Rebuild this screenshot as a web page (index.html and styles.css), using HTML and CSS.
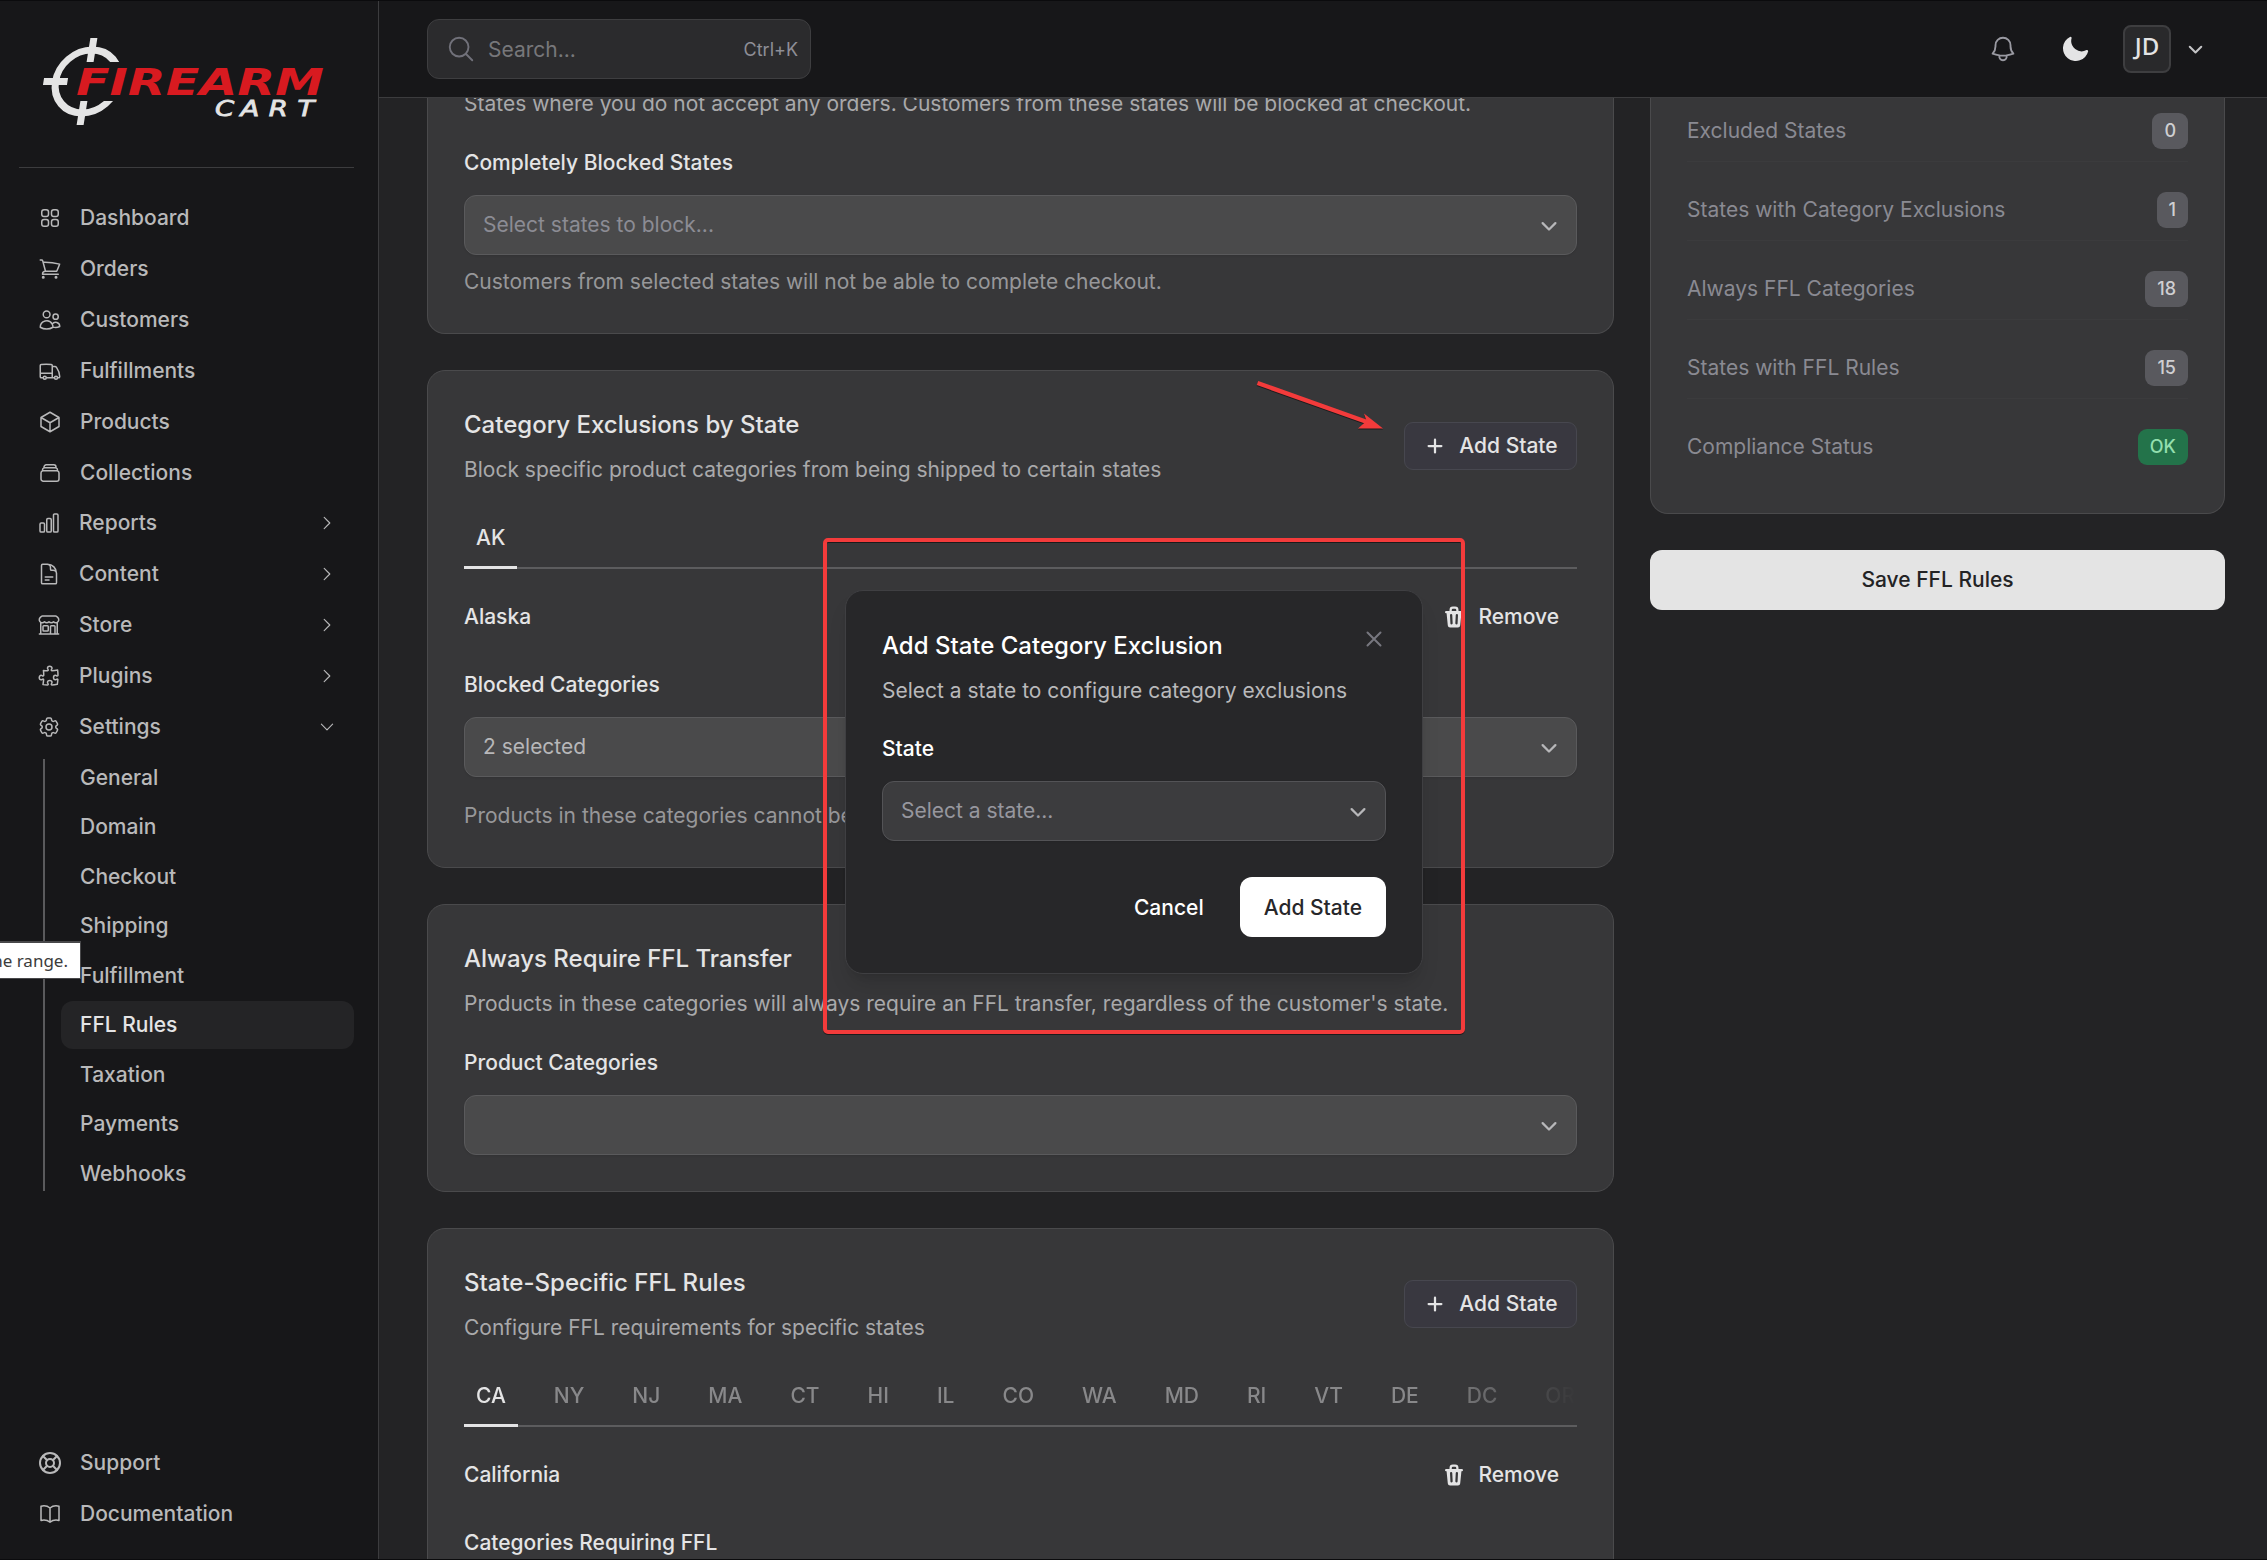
FILE: index.html
```html
<!DOCTYPE html>
<html lang="en">

	<head>
		<meta charset="UTF-8">
		<title>FFL Rules - Firearm Cart</title>
		<link rel="stylesheet" href="styles.css">
	</head>

	<body>
		<!-- shared icons -->
		<svg class="sprite">
			<symbol id="chev-down" viewBox="0 0 20 20"><path fill="currentColor" d="M5.22 8.22a.75.75 0 0 1 1.06 0L10 11.94l3.72-3.72a.75.75 0 1 1 1.06 1.06l-4.25 4.25a.75.75 0 0 1-1.06 0L5.22 9.28a.75.75 0 0 1 0-1.06Z"/></symbol>
			<symbol id="chev-right" viewBox="0 0 24 24"><path d="m8.25 4.5 7.5 7.5-7.5 7.5"/></symbol>
			<symbol id="plus" viewBox="0 0 16 16"><path fill="currentColor" d="M8.75 3.75a.75.75 0 0 0-1.5 0v3.5h-3.5a.75.75 0 0 0 0 1.5h3.5v3.5a.75.75 0 0 0 1.5 0v-3.5h3.5a.75.75 0 0 0 0-1.5h-3.5v-3.5Z"/></symbol>
			<symbol id="trash" viewBox="0 0 16 16"><path fill="currentColor" fill-rule="evenodd" d="M5 3.25V4H2.75a.75.75 0 0 0 0 1.5h.3l.815 8.15A1.5 1.5 0 0 0 5.357 15h5.285a1.5 1.5 0 0 0 1.493-1.35l.815-8.15h.3a.75.75 0 0 0 0-1.5H11v-.75A2.25 2.25 0 0 0 8.75 1h-1.5A2.25 2.25 0 0 0 5 3.25Zm2.25-.75a.75.75 0 0 0-.75.75V4h3v-.75a.75.75 0 0 0-.75-.75h-1.5ZM6.05 6a.75.75 0 0 1 .787.713l.275 5.5a.75.75 0 0 1-1.498.075l-.275-5.5A.75.75 0 0 1 6.05 6Zm3.9 0a.75.75 0 0 1 .712.787l-.275 5.5a.75.75 0 0 1-1.498-.075l.275-5.5a.75.75 0 0 1 .786-.711Z"/></symbol>
		</svg>

		<aside class="sidebar">
			<div class="brand">
				<svg class="logo" viewBox="0 0 290 92">
					<clipPath id="ring-gap"><path d="M-60-60H60v40.5H0v39h60V60H-60z"/></clipPath>
					<g transform="translate(47 45.5) skewX(-9)">
						<circle class="ring" r="31.5" clip-path="url(#ring-gap)"/>
						<path class="tick" d="M-3.5-43.5h7v24h-7zM-3.5 19.5h7v24h-7zM-43.5-3.5h24v7h-24z"/>
					</g>
					<text class="logo-main" x="36" y="58.5" textLength="248" lengthAdjust="spacingAndGlyphs">FIREARM</text>
					<text class="logo-sub" transform="scale(1.25 1)" x="140 160.5 183 206" y="80">CART</text>
				</svg>
			</div>

			<nav class="nav">
				<a class="nav-item"><svg class="icon" viewBox="0 0 24 24"><path d="M3.75 6A2.25 2.25 0 0 1 6 3.75h2.25A2.25 2.25 0 0 1 10.5 6v2.25a2.25 2.25 0 0 1-2.25 2.25H6a2.25 2.25 0 0 1-2.25-2.25V6ZM3.75 15.75A2.25 2.25 0 0 1 6 13.5h2.25a2.25 2.25 0 0 1 2.25 2.25V18a2.25 2.25 0 0 1-2.25 2.25H6A2.25 2.25 0 0 1 3.75 18v-2.25ZM13.5 6a2.25 2.25 0 0 1 2.25-2.25H18A2.25 2.25 0 0 1 20.25 6v2.25A2.25 2.25 0 0 1 18 10.5h-2.25a2.25 2.25 0 0 1-2.25-2.25V6ZM13.5 15.75a2.25 2.25 0 0 1 2.25-2.25H18a2.25 2.25 0 0 1 2.25 2.25V18A2.25 2.25 0 0 1 18 20.25h-2.25A2.25 2.25 0 0 1 13.5 18v-2.25Z"/></svg>Dashboard</a>
				<a class="nav-item"><svg class="icon" viewBox="0 0 24 24"><path d="M2.25 3h1.386c.51 0 .955.343 1.087.835l.383 1.437M7.5 14.25a3 3 0 0 0-3 3h15.75m-12.75-3h11.218c1.121-2.3 2.1-4.684 2.924-7.138a60.114 60.114 0 0 0-16.536-1.84M7.5 14.25 5.106 5.272M6 20.25a.75.75 0 1 1-1.5 0 .75.75 0 0 1 1.5 0Zm12.75 0a.75.75 0 1 1-1.5 0 .75.75 0 0 1 1.5 0Z"/></svg>Orders</a>
				<a class="nav-item"><svg class="icon" viewBox="0 0 24 24"><path d="M15 19.128a9.38 9.38 0 0 0 2.625.372 9.337 9.337 0 0 0 4.121-.952 4.125 4.125 0 0 0-7.533-2.493M15 19.128v-.003c0-1.113-.285-2.16-.786-3.07M15 19.128v.106A12.318 12.318 0 0 1 8.624 21c-2.331 0-4.512-.645-6.374-1.766l-.001-.109a6.375 6.375 0 0 1 11.964-3.07M12 6.375a3.375 3.375 0 1 1-6.75 0 3.375 3.375 0 0 1 6.75 0Zm8.25 2.25a2.625 2.625 0 1 1-5.25 0 2.625 2.625 0 0 1 5.25 0Z"/></svg>Customers</a>
				<a class="nav-item"><svg class="icon" viewBox="0 0 24 24"><path d="M8.25 18.75a1.5 1.5 0 0 1-3 0m3 0a1.5 1.5 0 0 0-3 0m3 0h6m-9 0H3.375a1.125 1.125 0 0 1-1.125-1.125V14.25m17.25 4.5a1.5 1.5 0 0 1-3 0m3 0a1.5 1.5 0 0 0-3 0m3 0h1.125c.621 0 1.129-.504 1.09-1.124a17.902 17.902 0 0 0-3.213-9.193 2.056 2.056 0 0 0-1.58-.86H14.25M16.5 18.75h-2.25m0-11.177v-.958c0-.568-.422-1.048-.987-1.106a48.554 48.554 0 0 0-10.026 0 1.106 1.106 0 0 0-.987 1.106v7.635m12-6.677v6.677m0 4.5v-4.5m0 0h-12"/></svg>Fulfillments</a>
				<a class="nav-item"><svg class="icon" viewBox="0 0 24 24"><path d="m21 7.5-9-5.25L3 7.5m18 0-9 5.25m9-5.25v9l-9 5.25M3 7.5l9 5.25M3 7.5v9l9 5.25m0-9v9"/></svg>Products</a>
				<a class="nav-item"><svg class="icon" viewBox="0 0 24 24"><path d="M6 6.878V6a2.25 2.25 0 0 1 2.25-2.25h7.5A2.25 2.25 0 0 1 18 6v.878m-12 0c.235-.083.487-.128.75-.128h10.5c.263 0 .515.045.75.128m-12 0A2.25 2.25 0 0 0 4.5 9v.878m13.5-3A2.25 2.25 0 0 1 19.5 9v.878m0 0a2.246 2.246 0 0 0-.75-.128H5.25c-.263 0-.515.045-.75.128m15 0A2.25 2.25 0 0 1 21 12v6a2.25 2.25 0 0 1-2.25 2.25H5.25A2.25 2.25 0 0 1 3 18v-6c0-.98.626-1.813 1.5-2.122"/></svg>Collections</a>

				<div class="nav-groups">
					<a class="nav-item"><svg class="icon" viewBox="0 0 24 24"><path d="M3 13.125C3 12.504 3.504 12 4.125 12h2.25c.621 0 1.125.504 1.125 1.125v6.75C7.5 20.496 6.996 21 6.375 21h-2.25A1.125 1.125 0 0 1 3 19.875v-6.75ZM9.75 8.625c0-.621.504-1.125 1.125-1.125h2.25c.621 0 1.125.504 1.125 1.125v11.25c0 .621-.504 1.125-1.125 1.125h-2.25a1.125 1.125 0 0 1-1.125-1.125V8.625ZM16.5 4.125c0-.621.504-1.125 1.125-1.125h2.25C20.496 3 21 3.504 21 4.125v15.75c0 .621-.504 1.125-1.125 1.125h-2.25a1.125 1.125 0 0 1-1.125-1.125V4.125Z"/></svg>Reports<svg class="icon caret"><use href="#chev-right"/></svg></a>
					<a class="nav-item"><svg class="icon" viewBox="0 0 24 24"><path d="M19.5 14.25v-2.625a3.375 3.375 0 0 0-3.375-3.375h-1.5A1.125 1.125 0 0 1 13.5 7.125v-1.5a3.375 3.375 0 0 0-3.375-3.375H8.25m0 12.75h7.5m-7.5 3H12M10.5 2.25H5.625c-.621 0-1.125.504-1.125 1.125v17.25c0 .621.504 1.125 1.125 1.125h12.75c.621 0 1.125-.504 1.125-1.125V11.25a9 9 0 0 0-9-9Z"/></svg>Content<svg class="icon caret"><use href="#chev-right"/></svg></a>
					<a class="nav-item"><svg class="icon" viewBox="0 0 24 24"><path d="M13.5 21v-7.5a.75.75 0 0 1 .75-.75h3a.75.75 0 0 1 .75.75V21m-4.5 0H2.36m11.14 0H18m0 0h3.64m-1.39 0V9.349M3.75 21V9.349m0 0a3.001 3.001 0 0 0 3.75-.615A2.993 2.993 0 0 0 9.75 9.75c.896 0 1.7-.393 2.25-1.016a2.993 2.993 0 0 0 2.25 1.016c.896 0 1.7-.393 2.25-1.015a3.001 3.001 0 0 0 3.75.614m-16.5 0a3.004 3.004 0 0 1-.621-4.72l1.189-1.19A1.5 1.5 0 0 1 5.378 3h13.243a1.5 1.5 0 0 1 1.06.44l1.19 1.189a3 3 0 0 1-.621 4.72M6.75 18h3.75a.75.75 0 0 0 .75-.75V13.5a.75.75 0 0 0-.75-.75H6.75a.75.75 0 0 0-.75.75v3.75c0 .414.336.75.75.75Z"/></svg>Store<svg class="icon caret"><use href="#chev-right"/></svg></a>
					<a class="nav-item"><svg class="icon" viewBox="0 0 24 24"><path d="M14.25 6.087c0-.355.186-.676.401-.959.221-.29.349-.634.349-1.003 0-1.036-1.007-1.875-2.25-1.875s-2.25.84-2.25 1.875c0 .369.128.713.349 1.003.215.283.401.604.401.959v0a.64.64 0 0 1-.657.643 48.39 48.39 0 0 1-4.163-.3c.186 1.613.293 3.25.315 4.907a.656.656 0 0 1-.658.663v0c-.355 0-.676-.186-.959-.401a1.647 1.647 0 0 0-1.003-.349c-1.036 0-1.875 1.007-1.875 2.25s.84 2.25 1.875 2.25c.369 0 .713-.128 1.003-.349.283-.215.604-.401.959-.401v0c.31 0 .555.26.532.57a48.039 48.039 0 0 1-.642 5.056c1.518.19 3.058.309 4.616.354a.64.64 0 0 0 .657-.643v0c0-.355-.186-.676-.401-.959a1.647 1.647 0 0 1-.349-1.003c0-1.035 1.008-1.875 2.25-1.875 1.243 0 2.25.84 2.25 1.875 0 .369-.128.713-.349 1.003-.215.283-.4.604-.4.959v0c0 .333.277.599.61.58a48.1 48.1 0 0 0 5.427-.63 48.05 48.05 0 0 0 .582-4.717.532.532 0 0 0-.533-.57v0c-.355 0-.676.186-.959.401-.29.221-.634.349-1.003.349-1.035 0-1.875-1.007-1.875-2.25s.84-2.25 1.875-2.25c.37 0 .713.128 1.003.349.283.215.604.401.96.401v0a.656.656 0 0 0 .658-.663 48.422 48.422 0 0 0-.37-5.36c-1.886.342-3.81.574-5.766.689a.578.578 0 0 1-.61-.58v0Z"/></svg>Plugins<svg class="icon caret"><use href="#chev-right"/></svg></a>
					<a class="nav-item"><svg class="icon" viewBox="0 0 24 24"><path d="M9.594 3.94c.09-.542.56-.94 1.11-.94h2.593c.55 0 1.02.398 1.11.94l.213 1.281c.063.374.313.686.645.87.074.04.147.083.22.127.325.196.72.257 1.075.124l1.217-.456a1.125 1.125 0 0 1 1.37.49l1.296 2.247a1.125 1.125 0 0 1-.26 1.431l-1.003.827c-.293.241-.438.613-.43.992a7.723 7.723 0 0 1 0 .255c-.008.378.137.75.43.991l1.004.827c.424.35.534.955.26 1.43l-1.298 2.247a1.125 1.125 0 0 1-1.369.491l-1.217-.456c-.355-.133-.75-.072-1.076.124a6.47 6.47 0 0 1-.22.128c-.331.183-.581.495-.644.869l-.213 1.281c-.09.543-.56.94-1.11.94h-2.594c-.55 0-1.019-.398-1.11-.94l-.213-1.281c-.062-.374-.312-.686-.644-.87a6.52 6.52 0 0 1-.22-.127c-.325-.196-.72-.257-1.076-.124l-1.217.456a1.125 1.125 0 0 1-1.369-.49l-1.297-2.247a1.125 1.125 0 0 1 .26-1.431l1.004-.827c.292-.24.437-.613.43-.991a6.932 6.932 0 0 1 0-.255c.007-.38-.138-.751-.43-.992l-1.004-.827a1.125 1.125 0 0 1-.26-1.43l1.297-2.247a1.125 1.125 0 0 1 1.37-.491l1.216.456c.356.133.751.072 1.076-.124.072-.044.146-.086.22-.128.332-.183.582-.495.644-.869l.214-1.28Z"/><path d="M15 12a3 3 0 1 1-6 0 3 3 0 0 1 6 0Z"/></svg>Settings<svg class="icon caret open"><use href="#chev-right"/></svg></a>
				</div>

				<div class="subnav">
					<a class="sub-item">General</a>
					<a class="sub-item">Domain</a>
					<a class="sub-item">Checkout</a>
					<a class="sub-item">Shipping</a>
					<a class="sub-item">Fulfillment</a>
					<a class="sub-item current">FFL Rules</a>
					<a class="sub-item">Taxation</a>
					<a class="sub-item">Payments</a>
					<a class="sub-item">Webhooks</a>
				</div>
			</nav>

			<nav class="nav nav-bottom">
				<a class="nav-item"><svg class="icon bold" viewBox="0 0 24 24"><circle cx="12" cy="12" r="10"/><circle cx="12" cy="12" r="4"/><path d="m4.93 4.93 4.24 4.24M14.83 9.17l4.24-4.24M14.83 14.83l4.24 4.24M9.17 14.83l-4.24 4.24"/></svg>Support</a>
				<a class="nav-item"><svg class="icon" viewBox="0 0 24 24"><path d="M12 6.042A8.967 8.967 0 0 0 6 3.75c-1.052 0-2.062.18-3 .512v14.25A8.987 8.987 0 0 1 6 18c2.305 0 4.408.867 6 2.292m0-14.25a8.966 8.966 0 0 1 6-2.292c1.052 0 2.062.18 3 .512v14.25A8.987 8.987 0 0 0 18 18a8.967 8.967 0 0 0-6 2.292m0-14.25v14.25"/></svg>Documentation</a>
			</nav>
		</aside>

		<div class="page">
			<header class="topbar">
				<div class="search">
					<svg class="icon large" viewBox="0 0 24 24"><path d="m21 21-5.197-5.197m0 0A7.5 7.5 0 1 0 5.196 5.196a7.5 7.5 0 0 0 10.607 10.607Z"/></svg>
					<span>Search...</span>
					<kbd>Ctrl+K</kbd>
				</div>
				<div class="tools">
					<svg class="icon large bell" viewBox="0 0 24 24"><path d="M14.857 17.082a23.848 23.848 0 0 0 5.454-1.31A8.967 8.967 0 0 1 18 9.75V9A6 6 0 0 0 6 9v.75a8.967 8.967 0 0 1-2.312 6.022c1.733.64 3.56 1.085 5.455 1.31m5.714 0a24.255 24.255 0 0 1-5.714 0m5.714 0a3 3 0 1 1-5.714 0"/></svg>
					<svg class="moon" viewBox="0 0 20 20"><path d="M7.455 2.004a.75.75 0 0 1 .26.77 7 7 0 0 0 9.958 7.967.75.75 0 0 1 1.067.853A8.5 8.5 0 1 1 6.647 1.921a.75.75 0 0 1 .808.083Z"/></svg>
					<div class="profile">
						<div class="avatar">JD</div>
						<svg class="profile-caret"><use href="#chev-down"/></svg>
					</div>
				</div>
			</header>

			<main class="content">
				<div class="column">
					<section class="card card-cut">
						<p class="desc">States where you do not accept any orders. Customers from these states will be blocked at checkout.</p>
						<div class="label">Completely Blocked States</div>
						<div class="select placeholder">Select states to block...<svg><use href="#chev-down"/></svg></div>
						<p class="help">Customers from selected states will not be able to complete checkout.</p>
					</section>

					<section class="card">
						<div class="card-head">
							<div>
								<h2>Category Exclusions by State</h2>
								<p class="desc">Block specific product categories from being shipped to certain states</p>
							</div>
							<button class="btn btn-add"><svg><use href="#plus"/></svg>Add State</button>
						</div>
						<div class="tabs-wrap">
							<div class="tabs"><span class="tab active">AK</span></div>
						</div>
						<div class="state-row">
							<span>Alaska</span>
							<button class="btn btn-remove"><svg><use href="#trash"/></svg>Remove</button>
						</div>
						<div class="label">Blocked Categories</div>
						<div class="select">2 selected<svg><use href="#chev-down"/></svg></div>
						<p class="help spaced">Products in these categories cannot be shipped to this state.</p>
					</section>

					<section class="card">
						<h2>Always Require FFL Transfer</h2>
						<p class="desc">Products in these categories will always require an FFL transfer, regardless of the customer's state.</p>
						<div class="label">Product Categories</div>
						<div class="select"><svg><use href="#chev-down"/></svg></div>
					</section>

					<section class="card">
						<div class="card-head">
							<div>
								<h2>State-Specific FFL Rules</h2>
								<p class="desc">Configure FFL requirements for specific states</p>
							</div>
							<button class="btn btn-add"><svg><use href="#plus"/></svg>Add State</button>
						</div>
						<div class="tabs-wrap">
							<div class="tabs fade">
								<span class="tab active">CA</span>
								<span class="tab">NY</span>
								<span class="tab">NJ</span>
								<span class="tab">MA</span>
								<span class="tab">CT</span>
								<span class="tab">HI</span>
								<span class="tab">IL</span>
								<span class="tab">CO</span>
								<span class="tab">WA</span>
								<span class="tab">MD</span>
								<span class="tab">RI</span>
								<span class="tab">VT</span>
								<span class="tab">DE</span>
								<span class="tab">DC</span>
								<span class="tab">OR</span>
							</div>
						</div>
						<div class="state-row">
							<span>California</span>
							<button class="btn btn-remove"><svg><use href="#trash"/></svg>Remove</button>
						</div>
						<div class="label">Categories Requiring FFL</div>
						<div class="select"><svg><use href="#chev-down"/></svg></div>
					</section>
				</div>

				<div class="column side">
					<section class="card card-cut summary">
						<div class="stat"><span>Excluded States</span><b class="badge">0</b></div>
						<div class="stat"><span>States with Category Exclusions</span><b class="badge">1</b></div>
						<div class="stat"><span>Always FFL Categories</span><b class="badge">18</b></div>
						<div class="stat"><span>States with FFL Rules</span><b class="badge">15</b></div>
						<div class="stat"><span>Compliance Status</span><b class="badge ok">OK</b></div>
					</section>
					<button class="btn btn-save">Save FFL Rules</button>
				</div>
			</main>
		</div>

		<div class="modal">
			<svg class="modal-close" viewBox="0 0 24 24"><path d="M5.5 5.5l13 13M18.5 5.5l-13 13"/></svg>
			<h2>Add State Category Exclusion</h2>
			<p class="desc">Select a state to configure category exclusions</p>
			<div class="label">State</div>
			<div class="select placeholder">Select a state...<svg><use href="#chev-down"/></svg></div>
			<div class="modal-actions">
				<button class="btn btn-cancel">Cancel</button>
				<button class="btn btn-primary">Add State</button>
			</div>
		</div>

		<!-- annotations -->
		<div class="mark-box"></div>
		<svg class="mark-arrow" viewBox="0 0 140 60">
			<path d="M7.5 8 117 47" stroke="#f33b3b" stroke-width="4.4"/>
			<path d="M133 53.5 114 38.5l2.5 7.5-8.5 7.5z" fill="#f33b3b"/>
		</svg>
		<div class="tip">the range.</div>
	</body>

</html>
```
FILE: styles.css
```css
* {
	box-sizing: border-box;
	margin: 0;
}

body {
	display: flex;
	height: 1560px;
	overflow: hidden;
	position: relative;
	border-top: 1px solid #0b0b0d;
	border-bottom: 1px solid #0b0b0d;
	background: #232325;
	color: #e4e4e5;
	font: 400 21px/30px Inter, sans-serif;
}

h2 {
	font-size: 24px;
	line-height: 36px;
	font-weight: 500;
}

.sprite {
	position: absolute;
	width: 0;
	height: 0;
}

.icon {
	width: 24px;
	height: 24px;
	flex: none;
	fill: none;
	stroke: currentColor;
	stroke-width: 1.5;
	stroke-linecap: round;
	stroke-linejoin: round;
}

.icon.bold {
	stroke-width: 2;
}

.icon.large {
	width: 30px;
	height: 30px;
}

/* sidebar */
.sidebar {
	display: flex;
	flex-direction: column;
	width: 379px;
	flex: none;
	padding: 35px 24px 21px 19px;
	border-right: 1px solid #3c3c3e;
	background: #171719;
}

.brand {
	height: 132px;
	padding-left: 21px;
	border-bottom: 1px solid #3c3c3e;
}

.logo {
	display: block;
	width: 290px;
	height: 92px;
}

.ring {
	fill: none;
	stroke: #e4e4e4;
	stroke-width: 7;
}

.tick {
	fill: #e4e4e4;
}

.logo-main {
	font: italic bold 38px "DejaVu Sans", sans-serif;
	fill: #d81a20;
}

.logo-sub {
	font: italic 22px "DejaVu Sans", sans-serif;
	fill: #e4e4e4;
	stroke: #e4e4e4;
	stroke-width: .8;
}

.nav {
	display: flex;
	flex-direction: column;
	gap: 3px;
	padding-top: 26px;
	color: #b9b9ba;
	font-weight: 500;
}

.nav-item {
	display: flex;
	align-items: center;
	gap: 18px;
	height: 48px;
	padding: 0 18px 0 19px;
}

.nav-groups {
	display: flex;
	flex-direction: column;
	gap: 3px;
	margin: -1.5px 0 0 -1px;
}

.caret {
	width: 18px;
	height: 18px;
	margin-left: auto;
}

.caret.open {
	transform: rotate(90deg);
}

.subnav {
	display: flex;
	flex-direction: column;
	gap: 1.5px;
	margin-left: 24px;
	padding-left: 18px;
	background: linear-gradient(#5a5a5c, #5a5a5c) 0 5px / 2px 432px no-repeat;
}

.sub-item {
	height: 48px;
	padding: 9px 19px;
	border-radius: 12px;
}

.sub-item.current {
	background: #242426;
	color: #e4e4e5;
}

.nav-bottom {
	margin-top: auto;
}

/* header */
.page {
	display: flex;
	flex: 1;
	flex-direction: column;
	min-width: 0;
}

.topbar {
	display: flex;
	flex: none;
	align-items: center;
	justify-content: space-between;
	height: 97px;
	padding: 0 58px 0 48px;
	border-bottom: 1px solid #3c3c3e;
	background: #171719;
}

.search {
	display: flex;
	align-items: center;
	gap: 12px;
	width: 384px;
	height: 60px;
	padding: 0 12px 0 18px;
	border: 1px solid #3e3e40;
	border-radius: 12px;
	background: #2b2b2d;
	color: #77777a;
}

.search span {
	padding-top: 2px;
}

.search kbd {
	margin-left: auto;
	color: #8e8e96;
	font: 400 18px Inter, sans-serif;
}

.search .icon {
	color: #71717a;
}

.tools {
	display: flex;
	align-items: center;
}

.bell {
	margin-right: 42px;
	color: #9a9aa2;
}

.moon {
	width: 30px;
	height: 30px;
	margin-right: 33px;
	fill: #e4e4e5;
}

.profile {
	display: flex;
	align-items: center;
	gap: 11px;
}

.avatar {
	width: 48px;
	height: 48px;
	border: 2px solid #3e3e40;
	border-radius: 8px;
	background: #29292b;
	font: 500 24px/38px "Noto Sans", sans-serif;
	text-align: center;
}

.profile-caret {
	width: 27px;
	height: 27px;
	margin-bottom: 2px;
	color: #c4c4c6;
}

/* cards */
.content {
	display: flex;
	flex: 1;
	gap: 36px;
	min-height: 0;
	padding: 0 42px 0 48px;
	overflow: hidden;
}

.column {
	display: flex;
	flex: none;
	flex-direction: column;
	gap: 36px;
	width: 1187px;
}

.column.side {
	width: 575px;
}

.card {
	flex: none;
	padding: 36px;
	border: 1px solid #4a4a4c;
	border-radius: 18px;
	background: #373739;
}

/* scrolled under the header */
.card-cut {
	padding-top: 0;
	border-top: 0;
	border-radius: 0 0 18px 18px;
}

.card-cut > .desc {
	margin-top: -9px;
}

.card-head {
	display: flex;
	align-items: center;
	justify-content: space-between;
}

.desc {
	color: #a9a9ab;
}

h2 + .desc {
	margin-top: 12px;
}

.label {
	margin: 29px 0 17px;
	font-weight: 500;
}

.select {
	display: flex;
	align-items: center;
	justify-content: space-between;
	height: 60px;
	padding: 0 12px 0 18px;
	border: 1px solid #5a5a5c;
	border-radius: 12px;
	background: #4a4a4b;
	color: #b7b7b9;
	box-shadow: 0 1px 2px rgba(0, 0, 0, .08);
}

.select.placeholder {
	color: #8c8c94;
}

.select svg {
	width: 30px;
	height: 30px;
	margin-left: auto;
	color: #b7b7b9;
}

.help {
	margin-top: 12px;
	color: #97979a;
}

.help.spaced {
	margin-top: 24px;
}

.btn {
	display: flex;
	align-items: center;
	justify-content: center;
	gap: 12px;
	border: 0;
	background: none;
	color: #e4e4e5;
	font: 500 21px/30px Inter, sans-serif;
}

.btn svg {
	width: 24px;
	height: 24px;
}

.btn-add {
	height: 48px;
	width: 173px;
	border: 1px solid #47474f;
	border-radius: 9px;
	background: #393840;
}

.btn-remove {
	height: 48px;
	padding: 0 18px;
}

/* tabs */
.tabs-wrap {
	height: 60px;
	margin-top: 24px;
	border-bottom: 2px solid #5c5c5e;
}

.tabs {
	display: flex;
	gap: 24px;
	height: 60px;
	overflow: hidden;
}

.tabs.fade {
	-webkit-mask-image: linear-gradient(to right, #000 965px, transparent 1113px);
	mask-image: linear-gradient(to right, #000 965px, transparent 1113px);
}

.tab {
	flex: none;
	padding: 14px 12px 0;
	color: #88888a;
	font-weight: 500;
}

.tab.active {
	border-bottom: 3px solid #e4e4e5;
	color: #e4e4e5;
}

.state-row {
	display: flex;
	align-items: center;
	justify-content: space-between;
	height: 48px;
	margin-top: 24px;
	font-weight: 500;
}

/* summary */
.summary {
	padding-top: 3px;
}

.stat {
	display: flex;
	align-items: center;
	justify-content: space-between;
	height: 61px;
	padding: 12px 0;
	margin-bottom: 18px;
	border-bottom: 1px solid #3b3b3d;
	color: #8a8a92;
}

.stat:last-child {
	height: 60px;
	margin-bottom: 0;
	border-bottom: 0;
}

.badge {
	height: 36px;
	padding: 0 12px;
	border-radius: 9px;
	background: #59595e;
	color: #cfcfd2;
	font-size: 18px;
	line-height: 36px;
	font-weight: 500;
}

.badge.ok {
	background: #23734a;
	color: #93dfae;
}

.btn-save {
	height: 60px;
	border-radius: 12px;
	background: #e4e4e4;
	color: #232325;
}

/* modal */
.modal {
	position: absolute;
	left: 845px;
	top: 589px;
	width: 578px;
	height: 384px;
	padding: 37px 36px 36px;
	border: 1px solid #3f3f42;
	border-radius: 18px;
	background: #272729;
	color: #fff;
	box-shadow: 0 15px 22px -5px rgba(0, 0, 0, .12), 0 6px 9px -6px rgba(0, 0, 0, .12);
}

.modal .desc {
	color: #b9b9bb;
}

.modal .label {
	margin: 28px 0 17px;
}

.modal-close {
	position: absolute;
	right: 36px;
	top: 36px;
	width: 24px;
	height: 24px;
	fill: none;
	stroke: #77777f;
	stroke-width: 2;
	stroke-linecap: round;
}

.modal .select {
	border-color: #535356;
	background: #3c3c3e;
	color: #97979e;
}

.modal-actions {
	display: flex;
	justify-content: flex-end;
	gap: 12px;
	margin-top: 36px;
}

.btn-cancel,
.btn-primary {
	height: 60px;
	padding: 2px 24px 0;
	border-radius: 12px;
	color: #fff;
}

.btn-primary {
	background: #fff;
	color: #27272a;
}

/* annotations */
.mark-box {
	position: absolute;
	left: 823px;
	top: 537px;
	width: 642px;
	height: 496px;
	border: 4px solid #f33b3b;
	border-radius: 5px;
	filter: drop-shadow(0 1px 0 rgba(0, 0, 0, .5));
}

.mark-arrow {
	position: absolute;
	left: 1250px;
	top: 374px;
	width: 140px;
	height: 60px;
	filter: drop-shadow(0 1px 0 rgba(0, 0, 0, .5));
}

.tip {
	position: absolute;
	left: 0;
	top: 940px;
	display: flex;
	justify-content: flex-end;
	width: 81px;
	height: 38px;
	padding-right: 12px;
	border: solid #48484a;
	border-width: 2px 1px 1px 0;
	background: #fff;
	color: #3c3c3c;
	font: 400 17px/35px "Noto Sans", sans-serif;
	overflow: hidden;
	white-space: nowrap;
}
```
